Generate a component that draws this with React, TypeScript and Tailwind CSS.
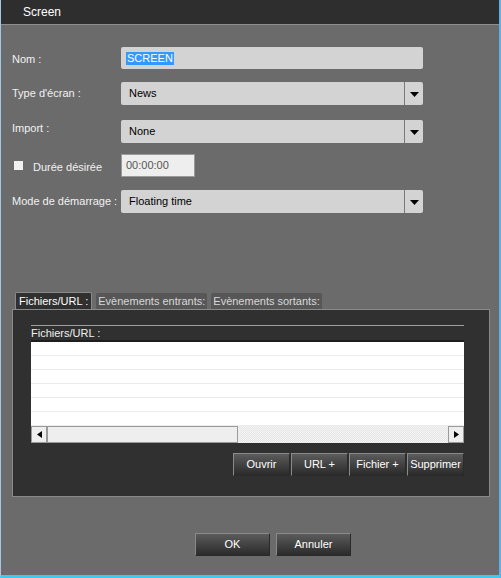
import React from "react"

const FONT = "font-['Liberation_Sans',Arial,sans-serif]"

function Caret() {
  return (
    <svg width="9" height="6" viewBox="0 0 9 6">
      <path d="M0 1h9L4.5 6z" fill="#000" />
    </svg>
  )
}

function Select({ value }: { value: string }) {
  return (
    <div className="flex h-[23px] w-[302px] items-center rounded-[2px] bg-[#d3d3d3]">
      <span className="flex-1 pl-[8px] text-[11px] text-black">{value}</span>
      <div className="flex h-full w-[19px] items-center justify-center border-l border-[#7a7a7a]">
        <Caret />
      </div>
    </div>
  )
}

function Btn({ label, w }: { label: string; w: string }) {
  return (
    <button
      className={`${w} flex h-[23px] items-center justify-center border border-t-[#8a8a8a] border-l-[#8a8a8a] border-r-[#2a2a2a] border-b-[#2a2a2a] bg-gradient-to-b from-[#5c5c5c] to-[#2b2b2b] text-[11px] text-white`}
    >
      {label}
    </button>
  )
}

export default function App() {
  const rows = [0, 1, 2, 3, 4, 5]
  return (
    <div className={`${FONT} flex h-[578px] w-[501px] flex-col border-l border-r-2 border-b-[3px] border-l-[#a8c4e4] border-r-[#5fb0e6] border-b-[#3fc8f0] bg-[#6b6b6b]`}>
      {/* Title */}
      <div className="flex h-[25px] shrink-0 items-center border-b border-[#8e8e8e] bg-[#2e2e2e] pl-[22px] text-[12px] text-white">
        Screen
      </div>

      {/* Form */}
      <div className="flex flex-col pl-[11px] text-[11px] text-[#f2f2f2]">
        <div className="mt-[22px] flex items-center">
          <span className="mt-[2px] w-[109px]">Nom :</span>
          <div className="flex h-[22px] w-[302px] items-center rounded-[2px] bg-[#d3d3d3] pl-[5px]">
            <span className="bg-[#3399ff] px-[1px] leading-[13px] text-white">SCREEN</span>
          </div>
        </div>
        <div className="mt-[13px] flex items-center">
          <span className="w-[109px]">Type d'écran :</span>
          <Select value="News" />
        </div>
        <div className="mt-[15px] flex items-start">
          <span className="w-[109px]">Import :</span>
          <Select value="None" />
        </div>
        <div className="mt-[11px] flex items-center">
          <div className="flex w-[109px] items-center">
            <span className="ml-[2px] h-[9px] w-[9px] bg-[#f0f0f0]" />
            <span className="ml-[10px] mt-[4px]">Durée désirée</span>
          </div>
          <div className="flex h-[23px] w-[74px] items-center border border-[#9a9a9a] bg-[#eeeeee] pl-[4px] text-[#555]">
            00:00:00
          </div>
        </div>
        <div className="mt-[13px] flex items-center">
          <span className="w-[109px]">Mode de démarrage :</span>
          <Select value="Floating time" />
        </div>
      </div>

      {/* Tabs */}
      <div className="mt-[79px] flex flex-col px-[11px] text-[11px]">
        <div className="flex items-end gap-[4px] pl-[3px]">
          <div className="flex h-[17px] items-center rounded-t-[2px] border border-b-0 border-[#8a8a8a] bg-[#303030] px-[3px] text-white">
            Fichiers/URL :
          </div>
          <div className="flex h-[16px] items-center rounded-t-[2px] bg-[#575757] px-[2px] text-[#d8d8d8]">
            Evènements entrants:
          </div>
          <div className="flex h-[16px] items-center rounded-t-[2px] bg-[#575757] px-[2px] text-[#d8d8d8]">
            Evènements sortants:
          </div>
        </div>
        <div className="flex h-[188px] w-[478px] flex-col border border-[#8a8a8a] bg-[#303030] pl-[18px] pt-[15px]">
          <div className="flex w-[433px] flex-col">
            <div className="flex h-[17px] items-center border-t border-b-2 border-t-[#a0a0a0] border-b-[#1e1e1e] bg-[#303030] text-[#f0f0f0]">
              Fichiers/URL :
            </div>
            <div className="flex flex-col bg-white">
              {rows.map((r) => (
                <div key={r} className="h-[14px] border-b border-[#ececec]" />
              ))}
            </div>
            <div className="flex h-[17px] bg-[repeating-conic-gradient(#f4f4f4_0%_25%,#e6e6e6_0%_50%)] bg-[length:2px_2px]">
              <div className="flex w-[16px] items-center justify-center border border-[#9a9a9a] bg-[#eeeeee]">
                <svg width="5" height="7" viewBox="0 0 5 7"><path d="M5 0v7L0 3.5z" fill="#000" /></svg>
              </div>
              <div className="w-[191px] border border-[#9a9a9a] bg-[#eeeeee]" />
              <div className="flex-1" />
              <div className="flex w-[16px] items-center justify-center border border-[#9a9a9a] bg-[#eeeeee]">
                <svg width="5" height="7" viewBox="0 0 5 7"><path d="M0 0v7l5-3.5z" fill="#000" /></svg>
              </div>
            </div>
          </div>
          <div className="mt-[10px] flex w-[433px] justify-end gap-[1px]">
            <Btn label="Ouvrir" w="w-[57px]" />
            <Btn label="URL +" w="w-[57px]" />
            <Btn label="Fichier +" w="w-[57px]" />
            <Btn label="Supprimer" w="w-[57px]" />
          </div>
        </div>
      </div>

      {/* Footer */}
      <div className="mt-[36px] flex gap-[6px] pl-[194px]">
        <Btn label="OK" w="w-[75px]" />
        <Btn label="Annuler" w="w-[75px]" />
      </div>
    </div>
  )
}
